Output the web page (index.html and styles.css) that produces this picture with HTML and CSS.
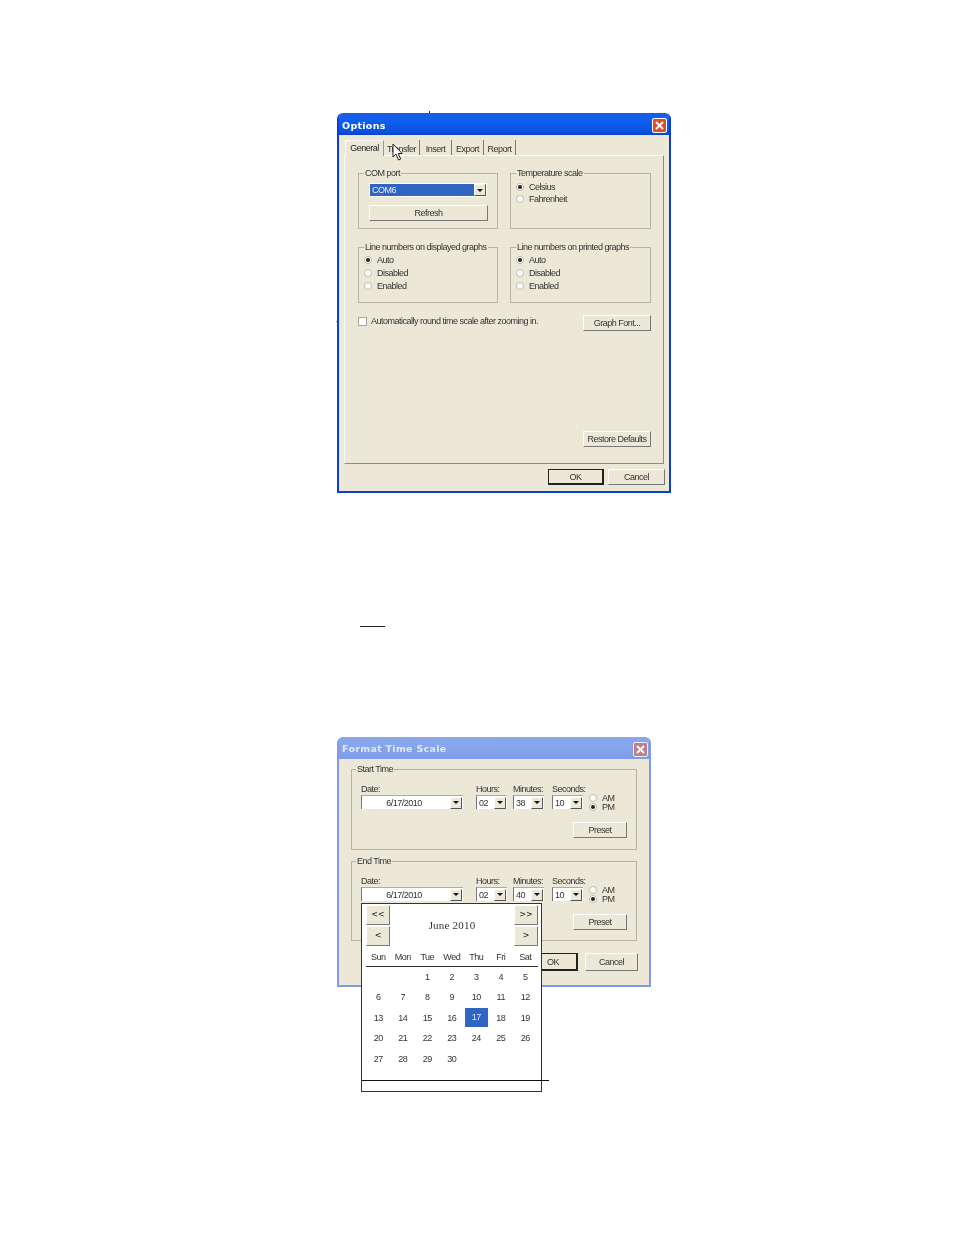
FILE: index.html
```html
<!DOCTYPE html>
<html lang="en">
<head>
<meta charset="utf-8">
<title>Options and Format Time Scale</title>
<link rel="stylesheet" href="styles.css">
</head>
<body>
<main class="page">
  <span class="tick tick-top"></span>
  <span class="tick tick-left"></span>
  <span class="rule-short"></span>

  <section class="win win-options">
    <header class="title"><span class="title-text">Options</span>
      <span class="close"><svg viewBox="0 0 15 15" width="15" height="15"><path d="M4 4l7 7M11 4l-7 7" stroke="#fff" stroke-width="2" fill="none"/></svg></span>
    </header>
    <div class="client">
      <nav class="tabs">
        <span class="tab tab-on">General</span>
        <span class="tab t-transfer">Transfer</span>
        <span class="tab t-insert">Insert</span>
        <span class="tab t-export">Export</span>
        <span class="tab t-report">Report</span>
      </nav>
      <div class="panel">
        <div class="group-grid">
          <div class="group g-top">
            <span class="legend">COM port</span>
            <div class="combo"><span class="combo-value">COM6</span><span class="drop"><i></i></span></div>
            <div class="btn btn-refresh">Refresh</div>
          </div>
          <div class="group g-top">
            <span class="legend">Temperature scale</span>
            <div class="radios r-temp">
              <div class="radio"><i class="dot on"></i>Celsius</div>
              <div class="radio"><i class="dot"></i>Fahrenheit</div>
            </div>
          </div>
          <div class="group g-low">
            <span class="legend">Line numbers on displayed graphs</span>
            <div class="radios r-line">
              <div class="radio"><i class="dot on"></i>Auto</div>
              <div class="radio"><i class="dot"></i>Disabled</div>
              <div class="radio"><i class="dot"></i>Enabled</div>
            </div>
          </div>
          <div class="group g-low">
            <span class="legend">Line numbers on printed graphs</span>
            <div class="radios r-line">
              <div class="radio"><i class="dot on"></i>Auto</div>
              <div class="radio"><i class="dot"></i>Disabled</div>
              <div class="radio"><i class="dot"></i>Enabled</div>
            </div>
          </div>
        </div>
        <div class="check-row">
          <div class="check"><i class="box"></i>Automatically round time scale after zooming in.</div>
          <div class="btn btn-side">Graph Font...</div>
        </div>
        <div class="restore-row"><div class="btn btn-side">Restore Defaults</div></div>
      </div>
      <footer class="foot">
        <div class="btn btn-default btn-ok">OK</div>
        <div class="btn btn-cancel">Cancel</div>
      </footer>
    </div>
    <svg class="cursor" viewBox="0 0 11 18" width="11" height="18"><path d="M1 1v13l3-3 2.500 6 2.200-1-2.500-5.500h4z" fill="#fff" stroke="#222" stroke-width="1"/></svg>
  </section>

  <section class="win win-format">
    <header class="title title-soft"><span class="title-text">Format Time Scale</span>
      <span class="close close-soft"><svg viewBox="0 0 15 15" width="15" height="15"><path d="M4 4l7 7M11 4l-7 7" stroke="#fff" stroke-width="2" fill="none"/></svg></span>
    </header>
    <div class="client client-format">
      <div class="group g-time">
        <span class="legend">Start Time</span>
        <div class="time-row">
          <div class="field f-date"><label>Date:</label><div class="input"><span class="v-date">6/17/2010</span><span class="drop"><i></i></span></div></div>
          <div class="field f-h"><label>Hours:</label><div class="input"><span>02</span><span class="drop"><i></i></span></div></div>
          <div class="field f-m"><label>Minutes:</label><div class="input"><span>38</span><span class="drop"><i></i></span></div></div>
          <div class="field f-s"><label>Seconds:</label><div class="input"><span>10</span><span class="drop"><i></i></span></div></div>
          <div class="ampm">
            <div class="radio"><i class="dot"></i>AM</div>
            <div class="radio"><i class="dot on"></i>PM</div>
          </div>
        </div>
        <div class="btn btn-preset">Preset</div>
      </div>
      <div class="group g-time g-end">
        <span class="legend">End Time</span>
        <div class="time-row">
          <div class="field f-date"><label>Date:</label><div class="input"><span class="v-date">6/17/2010</span><span class="drop"><i></i></span></div></div>
          <div class="field f-h"><label>Hours:</label><div class="input"><span>02</span><span class="drop"><i></i></span></div></div>
          <div class="field f-m"><label>Minutes:</label><div class="input"><span>40</span><span class="drop"><i></i></span></div></div>
          <div class="field f-s"><label>Seconds:</label><div class="input"><span>10</span><span class="drop"><i></i></span></div></div>
          <div class="ampm">
            <div class="radio"><i class="dot"></i>AM</div>
            <div class="radio"><i class="dot on"></i>PM</div>
          </div>
        </div>
        <div class="btn btn-preset">Preset</div>
      </div>
      <footer class="foot foot-format">
        <div class="btn btn-default btn-ok2">OK</div>
        <div class="btn btn-cancel2">Cancel</div>
      </footer>
    </div>
  </section>

  <section class="calendar">
    <div class="cal-head">
      <div class="nav-col">
        <div class="btn nav">&lt;&lt;</div>
        <div class="btn nav">&lt;</div>
      </div>
      <div class="month">June 2010</div>
      <div class="nav-col">
        <div class="btn nav">&gt;&gt;</div>
        <div class="btn nav">&gt;</div>
      </div>
    </div>
    <div class="weekdays">
      <span>Sun</span><span>Mon</span><span>Tue</span><span>Wed</span><span>Thu</span><span>Fri</span><span>Sat</span>
    </div>
    <div class="days">
      <span></span><span></span>
      <span>1</span><span>2</span><span>3</span><span>4</span><span>5</span>
      <span>6</span><span>7</span><span>8</span><span>9</span><span>10</span><span>11</span><span>12</span>
      <span>13</span><span>14</span><span>15</span><span>16</span><span class="today">17</span><span>18</span><span>19</span>
      <span>20</span><span>21</span><span>22</span><span>23</span><span>24</span><span>25</span><span>26</span>
      <span>27</span><span>28</span><span>29</span><span>30</span>
    </div>
  </section>
  <span class="rule-cal"></span>
</main>
</body>
</html>
```
FILE: styles.css
```css
* { box-sizing: border-box; }
html, body { margin: 0; padding: 0; background: #fff; }
.page {
  position: relative;
  width: 954px;
  height: 1235px;
  overflow: hidden;
  font-family: "Liberation Sans", Arial, sans-serif;
  font-size: 9px;
  letter-spacing: -0.5px;
  line-height: 12px;
  color: #222;
}
.tick { position: absolute; background: #333; }
.tick-top { left: 429px; top: 111px; width: 1px; height: 2px; }
.tick-left { left: 336px; top: 321px; width: 1px; height: 1px; background: #999; }
.rule-short { position: absolute; left: 360px; top: 626px; width: 25px; height: 1px; background: #222; }
.rule-cal { position: absolute; left: 362px; top: 1080px; width: 187px; height: 1px; background: #111; }

.win { position: absolute; border-radius: 6px 6px 0 0; overflow: hidden; filter: blur(0.4px); }
.win-options { left: 337px; top: 113px; width: 334px; height: 380px; border: 2px solid #0b3fd0; border-top: 0; background: #ebe8d8; }
.win-format { left: 337px; top: 737px; width: 314px; height: 250px; border: 2px solid #7f9be6; border-top: 0; background: #ebe8d8; }

.title { display: flex; align-items: center; justify-content: space-between; height: 22px; margin: 0 -2px; padding: 2px 4px 0 5px; background: linear-gradient(180deg, #1a5de6 0%, #0f5ff0 30%, #0a52e0 85%, #0a44c8 100%); }
.title-soft { background: linear-gradient(180deg, #8aa6ea 0%, #86a6ee 40%, #7d9be6 100%); padding-right: 3px; }
.title-text { color: #fff; font-size: 9.500px; line-height: 12px; font-weight: 700; letter-spacing: 0.3px; font-family: "DejaVu Sans", sans-serif; margin-top: 2px; }
.title-soft .title-text { color: #dfe7fa; margin-top: 0; }
.close { display: block; width: 15px; height: 15px; border: 1px solid #fff; border-radius: 2px; background: #dc4f2c; }
.close svg { display: block; margin: -1px; }
.close-soft { background: #c27e88; border-color: #e8ecf8; }

.client { padding: 5px 4px 0 5px; }
.tabs { display: flex; height: 15px; padding-left: 1px; }
.tab { display: block; height: 15px; padding-top: 3px; text-align: center; border-right: 1px solid #777; color: #333; }
.tab-on { width: 39px; height: 16px; padding-top: 1px; border-top: 1px solid #fff; border-left: 1px solid #fff; border-right: 1px solid #999; position: relative; z-index: 1; background: #ebe8d8; color: #222; }
.t-transfer { width: 36px; }
.t-insert { width: 32px; }
.t-export { width: 32px; }
.t-report { width: 32px; }
.panel { width: 320px; height: 309px; padding: 17px 13px 0 13px; border: 1px solid; border-color: #fff #8f8d80 #8f8d80 #fff; }

.group-grid { display: grid; grid-template-columns: 140px 141px; column-gap: 12px; row-gap: 18px; }
.group { border: 1px solid #b5b3a3; padding: 0 8px; }
.g-top { height: 56px; }
.g-low { height: 56px; }
.legend { display: block; width: fit-content; margin: -7px 0 0 -3px; padding: 0 1px; height: 12px; background: #ebe8d8; color: #333; white-space: nowrap; }

.combo { display: flex; align-items: center; width: 118px; height: 14px; margin: 4px 0 0 2px; background: #fff; padding: 1px; }
.combo-value { flex: 1; height: 12px; background: #2f66c4; color: #e8eefc; padding-left: 2px; line-height: 12px; }
.drop { display: flex; align-items: center; justify-content: center; width: 12px; height: 12px; background: #ebe8d8; border: 1px solid; border-color: #fff #555 #555 #fff; flex: none; }
.drop i { display: block; width: 0; height: 0; border: 3px solid transparent; border-top: 3px solid #111; border-bottom: 0; }
.btn { display: flex; align-items: center; justify-content: center; background: #ebe8d8; border: 1px solid; border-color: #fff #777 #777 #fff; color: #333; white-space: nowrap; }
.btn-refresh { width: 119px; height: 16px; margin: 8px 0 0 2px; }

.radios { display: flex; flex-direction: column; }
.r-temp { margin-top: 2px; margin-left: -3px; }
.r-temp .radio { height: 12px; }
.r-line { margin-top: 0; margin-left: -3px; }
.radio { display: flex; align-items: center; height: 13px; color: #333; }
.dot { position: relative; display: block; flex: none; width: 8px; height: 8px; margin-right: 5px; border-radius: 50%; background: #fff; border: 1px solid #bdbbac; }
.dot.on::after { content: ""; position: absolute; left: 1px; top: 1px; width: 4px; height: 4px; border-radius: 50%; background: #222; }

.check-row { display: flex; justify-content: space-between; align-items: flex-start; width: 293px; margin-top: 12px; }
.check { display: flex; align-items: center; height: 12px; color: #333; }
.box { display: block; width: 9px; height: 9px; margin-right: 4px; background: #fff; border: 1px solid #a8a698; }
.btn-side { width: 68px; height: 16px; }
.restore-row { display: flex; justify-content: flex-end; width: 293px; margin-top: 100px; }

.foot { display: flex; justify-content: flex-end; column-gap: 4px; padding-top: 5px; }
.btn-default { border: 1px solid #222; border-right-width: 2px; border-bottom-width: 2px; }
.btn-ok { width: 56px; height: 16px; }
.btn-cancel { width: 57px; height: 16px; }

.client-format { padding: 10px 11px 0 12px; }
.g-time { height: 81px; padding: 0 9px; width: 286px; }
.g-time .legend { margin-left: -5px; }
.g-end { margin-top: 11px; height: 80px; }
.time-row { display: flex; margin-top: 7px; }
.field { display: flex; flex-direction: column; }
.field label { display: block; height: 13px; padding-top: 1px; color: #333; white-space: nowrap; }
.f-date { width: 102px; margin-right: 13px; }
.f-h { width: 31px; margin-right: 6px; }
.f-m { width: 31px; margin-right: 8px; }
.f-s { width: 31px; margin-right: 6px; }
.input { display: flex; align-items: center; justify-content: space-between; height: 14px; background: #fff; border-left: 1px solid #777; border-top: 1px solid #aaa; padding: 0 1px 0 2px; color: #333; }
.v-date { flex: 1; text-align: center; padding-right: 6px; }
.ampm { margin-top: 11px; display: flex; flex-direction: column; }
.ampm .radio { height: 9px; }
.btn-preset { width: 54px; height: 16px; margin: 11px 0 0 212px; }
.foot-format { padding: 12px 0 0 0; column-gap: 7px; width: 287px; }
.btn-ok2 { width: 41px; height: 18px; justify-content: flex-start; padding-left: 9px; }
.btn-cancel2 { width: 53px; height: 18px; }

.cursor { position: absolute; left: 53px; top: 30px; }

.calendar { position: absolute; left: 361px; top: 903px; width: 181px; height: 189px; background: #fff; border: 1px solid #333; padding: 1px 3px 0 4px; filter: blur(0.4px); }
.cal-head { display: flex; justify-content: space-between; width: 172px; }
.nav-col { display: flex; flex-direction: column; row-gap: 1px; }
.nav { width: 24px; height: 20px; font-family: "DejaVu Sans", sans-serif; font-size: 8px; letter-spacing: 0; color: #222; }
.month { align-self: center; margin-top: -2px; font-family: "Liberation Serif", serif; font-size: 11px; letter-spacing: 0.2px; color: #333; }
.weekdays { display: grid; grid-template-columns: repeat(7, 24.500px); width: 172px; height: 21px; padding-top: 5px; border-bottom: 1px solid #333; color: #333; }
.weekdays span, .days span { display: block; text-align: center; }
.days { display: grid; grid-template-columns: repeat(7, 24.500px); grid-auto-rows: 20.400px; width: 172px; color: #333; }
.days span { line-height: 20px; }
.days .today { margin: 0 1px 1px; line-height: 19px; background: #2f66c4; color: #dfe8fb; }
```
